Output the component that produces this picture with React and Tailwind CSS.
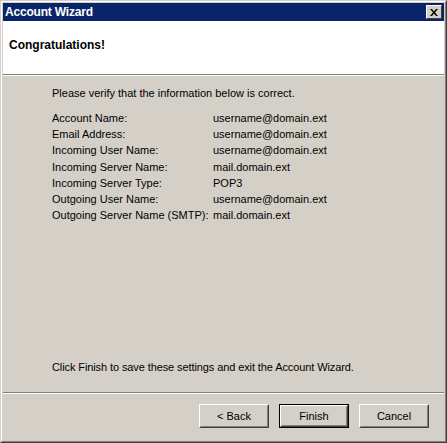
const ROWS = [
  ['Account Name:', 'username@domain.ext'],
  ['Email Address:', 'username@domain.ext'],
  ['Incoming User Name:', 'username@domain.ext'],
  ['Incoming Server Name:', 'mail.domain.ext'],
  ['Incoming Server Type:', 'POP3'],
  ['Outgoing User Name:', 'username@domain.ext'],
  ['Outgoing Server Name (SMTP):', 'mail.domain.ext'],
]

function Btn({ children, primary }) {
  const face = (
    <div className="w-full h-full flex items-center justify-center border border-t-white border-l-white border-r-[#404040] border-b-[#404040]">
      <div className="w-full h-full flex items-center justify-center border border-t-[#d4d0c8] border-l-[#d4d0c8] border-r-[#808080] border-b-[#808080]">
        {children}
      </div>
    </div>
  )
  return (
    <div className={`w-[70px] h-[24px] ${primary ? 'border border-black' : ''}`}>
      {face}
    </div>
  )
}

export default function App() {
  return (
    <div
      className="w-[447px] h-[443px] bg-[#d4d0c8] text-black text-[11px] leading-none border border-t-[#d4d0c8] border-l-[#d4d0c8] border-r-[#404040] border-b-[#404040]"
      style={{ fontFamily: '"Liberation Sans", Arial, sans-serif' }}
    >
      <div className="w-full h-full flex flex-col border border-t-white border-l-white border-r-[#808080] border-b-[#808080] p-px">
        {/* title bar */}
        <div className="h-[18px] bg-[#0a246a] flex items-center justify-between pl-[2px] pr-[2px]">
          <span className="text-white font-bold text-[12px] tracking-[-0.2px]">Account Wizard</span>
          <div className="w-[16px] h-[14px] bg-[#d4d0c8] border border-t-white border-l-white border-r-[#404040] border-b-[#404040] flex items-center justify-center">
            <svg width="8" height="7" viewBox="0 0 8 7">
              <path d="M0 0h2l2 2.5L6 0h2L5 3.5 8 7H6L4 4.5 2 7H0l3-3.5z" fill="#000" />
            </svg>
          </div>
        </div>

        {/* header */}
        <div className="h-[53px] bg-white flex items-center pl-[6px]">
          <span className="font-bold text-[12px] -mt-[5px]">Congratulations!</span>
        </div>
        <div className="border-t border-t-[#808080] border-b border-b-white" />

        {/* body */}
        <div className="flex-1 flex flex-col pl-[49px] pt-[9px]">
          <div className="h-[16px] flex items-center">Please verify that the information below is correct.</div>
          <div className="mt-[9px] flex flex-col">
            {ROWS.map(([k, v]) => (
              <div key={k} className="h-[16.3px] flex items-center">
                <span className="w-[161px]">{k}</span>
                <span>{v}</span>
              </div>
            ))}
          </div>
          <div className="flex-1" />
          <div className="h-[16px] flex items-center mb-[17px] tracking-[-0.1px]">
            Click Finish to save these settings and exit the Account Wizard.
          </div>
        </div>

        <div className="border-t border-t-[#808080] border-b border-b-white" />

        {/* buttons */}
        <div className="h-[46px] flex justify-end items-start gap-[10px] pt-[10px] pr-[15px]">
          <Btn>&lt; Back</Btn>
          <Btn primary>Finish</Btn>
          <Btn>Cancel</Btn>
        </div>
      </div>
    </div>
  )
}
